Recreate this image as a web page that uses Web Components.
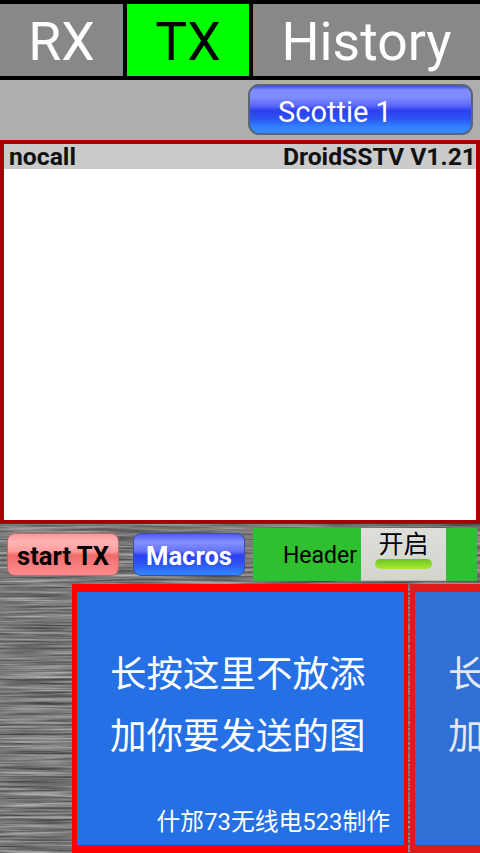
<!DOCTYPE html>
<html>
<head>
<meta charset="utf-8">
<style>
html, body { margin: 0; padding: 0; }
body { width: 480px; height: 853px; overflow: hidden; font-family: Roboto, "Noto Sans CJK SC", sans-serif; }
</style>
</head>
<body>
<sstv-app>
  <sstv-tabs slot="tabs">
    <sstv-tab>RX</sstv-tab>
    <sstv-tab active>TX</sstv-tab>
    <sstv-tab wide>History</sstv-tab>
  </sstv-tabs>
  <sstv-mode slot="mode">Scottie 1</sstv-mode>
  <sstv-preview slot="preview" call="nocall" version="DroidSSTV V1.21"></sstv-preview>
  <sstv-controls slot="controls">
    <sstv-button color="red">start TX</sstv-button>
    <sstv-button color="blue">Macros</sstv-button>
    <sstv-header-switch>开启</sstv-header-switch>
  </sstv-controls>
  <sstv-gallery slot="gallery">
    <sstv-card credit="什邡73无线电523制作">长按这里不放添<br>加你要发送的图</sstv-card>
    <sstv-card dim credit="什邡73无线电523制作">长按这里不放添<br>加你要发送的图</sstv-card>
  </sstv-gallery>
</sstv-app>

<script>
const FONT = 'Roboto, "Noto Sans CJK SC", sans-serif'

class SstvApp extends HTMLElement {
  constructor() {
    super()
    const shadow = this.attachShadow({mode: 'open'})
    shadow.innerHTML = `
<style>
:host {
  display: flex;
  flex-direction: column;
  width: 480px;
  height: 853px;
  font-family: ${FONT};
  overflow: hidden;
  background: #aaa;
}
.wood {
  position: relative;
  flex: 1;
  display: flex;
  flex-direction: column;
  overflow: hidden;
  background: #777;
}
.wood svg {
  position: absolute;
  left: 0;
  top: 0;
}
.wood > div {
  position: relative;
  display: flex;
  flex-direction: column;
  flex: 1;
  min-height: 0;
}
.mode {
  display: flex;
  justify-content: flex-end;
  height: 60px;
  background: #aeaeae;
  box-sizing: border-box;
  padding: 4px 7px 0 0;
}
</style>
<slot name="tabs"></slot>
<div class="mode"><slot name="mode"></slot></div>
<slot name="preview"></slot>
<div class="wood">
  <svg width="480" height="329" aria-hidden="true">
    <filter id="brushed" x="0" y="0" width="100%" height="100%" color-interpolation-filters="sRGB">
      <feTurbulence type="fractalNoise" baseFrequency="0.012 0.42" numOctaves="3" seed="7"/>
      <feColorMatrix type="matrix" values="0.65 0 0 0 0.15  0.65 0 0 0 0.15  0.65 0 0 0 0.15  0 0 0 0 1"/>
    </filter>
    <rect width="480" height="329" filter="url(#brushed)"/>
  </svg>
  <div>
    <slot name="controls"></slot>
    <slot name="gallery"></slot>
  </div>
</div>
`
  }
}
customElements.define('sstv-app', SstvApp)

class SstvTabs extends HTMLElement {
  constructor() {
    super()
    const shadow = this.attachShadow({mode: 'open'})
    shadow.innerHTML = `
<style>
:host {
  display: flex;
  gap: 4px;
  height: 72px;
  padding: 4px 0;
  background: #000;
}
</style>
<slot></slot>
`
  }
}
customElements.define('sstv-tabs', SstvTabs)

class SstvTab extends HTMLElement {
  constructor() {
    super()
    const shadow = this.attachShadow({mode: 'open'})
    shadow.innerHTML = `
<style>
:host {
  display: flex;
  align-items: center;
  justify-content: center;
  width: 123px;
  background: #888;
  color: #fff;
  font-size: 53.5px;
  line-height: 72px;
  padding-top: 4px;
  box-sizing: border-box;
}
:host([active]) {
  width: 122px;
  background: #00ff00;
  color: #000;
}
:host([wide]) {
  width: 227px;
}
</style>
<slot></slot>
`
  }
}
customElements.define('sstv-tab', SstvTab)

class SstvMode extends HTMLElement {
  constructor() {
    super()
    const shadow = this.attachShadow({mode: 'open'})
    shadow.innerHTML = `
<style>
:host {
  display: flex;
  align-items: center;
  width: 225px;
  height: 51px;
  box-sizing: border-box;
  padding-left: 28px;
  padding-top: 4px;
  border: 2px solid #5a6478;
  border-radius: 11px;
  color: #fff;
  font-size: 29px;
  background: linear-gradient(#3a4cf0 0, #7f8cff 8%, #7f8cff 24%, #5a68f8 42%, #2e40f0 52%, #2c50f4 68%, #3384ff 88%, #3388ff 100%);
}
</style>
<slot></slot>
`
  }
}
customElements.define('sstv-mode', SstvMode)

class SstvPreview extends HTMLElement {
  constructor() {
    super()
    const shadow = this.attachShadow({mode: 'open'})
    shadow.innerHTML = `
<style>
:host {
  display: flex;
  flex-direction: column;
  height: 384px;
  box-sizing: border-box;
  border: 4px solid #a80000;
  background: #fff;
}
.bar {
  display: flex;
  justify-content: space-between;
  align-items: center;
  height: 25px;
  padding: 0 0 0 5px;
  background: #cbcbcb;
  color: #111;
  font-size: 24.7px;
  font-weight: 700;
  white-space: nowrap;
}
</style>
<div class="bar"><span id="call"></span><span id="version"></span></div>
<slot></slot>
`
    shadow.getElementById('call').textContent = this.getAttribute('call')
    shadow.getElementById('version').textContent = this.getAttribute('version')
  }
}
customElements.define('sstv-preview', SstvPreview)

class SstvControls extends HTMLElement {
  constructor() {
    super()
    const shadow = this.attachShadow({mode: 'open'})
    shadow.innerHTML = `
<style>
:host {
  display: flex;
  align-items: flex-start;
  height: 60px;
  box-sizing: border-box;
  padding: 4px 3px 0 7px;
}
</style>
<slot></slot>
`
  }
}
customElements.define('sstv-controls', SstvControls)

class SstvButton extends HTMLElement {
  constructor() {
    super()
    const shadow = this.attachShadow({mode: 'open'})
    shadow.innerHTML = `
<style>
:host {
  display: flex;
  align-items: center;
  justify-content: center;
  width: 112px;
  height: 43px;
  margin-top: 5px;
  margin-right: 14px;
  padding-top: 3px;
  box-sizing: border-box;
  border-radius: 8px;
  font-size: 25.6px;
  font-weight: 700;
}
:host([color=red]) {
  color: #000;
  border: 1px solid #b86a6a;
  background: linear-gradient(#ff9a9a 0, #ffb4b4 20%, #ff9c9c 42%, #f06a6a 52%, #f77a7a 70%, #ff8c8c 100%);
}
:host([color=blue]) {
  color: #fff;
  margin-right: 8px;
  border: 1px solid #3b4bb0;
  background: linear-gradient(#4c5cf0 0, #8490ff 20%, #6472f8 42%, #2e40f0 52%, #2c54f4 72%, #3388ff 100%);
}
</style>
<slot></slot>
`
  }
}
customElements.define('sstv-button', SstvButton)

class SstvHeaderSwitch extends HTMLElement {
  constructor() {
    super()
    const shadow = this.attachShadow({mode: 'open'})
    shadow.innerHTML = `
<style>
:host {
  display: flex;
  align-items: stretch;
  justify-content: flex-end;
  width: 224px;
  height: 53px;
  box-sizing: border-box;
  padding-right: 31px;
  background: #2fbf2f;
  color: #000;
  font-size: 23px;
}
.label {
  align-self: center;
  margin-right: 4px;
  margin-top: 2px;
}
.toggle {
  display: flex;
  flex-direction: column;
  align-items: center;
  width: 85px;
  background: linear-gradient(#dedfdb, #d2d4ce);
  border-bottom: 1px solid #bbb;
  box-sizing: border-box;
  font-size: 25px;
}
.text {
  line-height: 32px;
  margin-top: 1px;
}
.led {
  width: 57px;
  height: 10px;
  margin-top: -2px;
  border-radius: 5px;
  background: linear-gradient(#6fc41e, #a8ea38);
}
</style>
<span class="label">Header</span>
<div class="toggle">
  <span class="text"><slot></slot></span>
  <span class="led"></span>
</div>
`
  }
}
customElements.define('sstv-header-switch', SstvHeaderSwitch)

class SstvGallery extends HTMLElement {
  constructor() {
    super()
    const shadow = this.attachShadow({mode: 'open'})
    shadow.innerHTML = `
<style>
:host {
  display: flex;
  flex: 1;
  min-height: 0;
  gap: 2px;
  padding-left: 72px;
  overflow: hidden;
}
</style>
<slot></slot>
`
  }
}
customElements.define('sstv-gallery', SstvGallery)

class SstvCard extends HTMLElement {
  constructor() {
    super()
    const shadow = this.attachShadow({mode: 'open'})
    shadow.innerHTML = `
<style>
:host {
  display: flex;
  flex-direction: column;
  flex: none;
  width: 336px;
  height: 269px;
  box-sizing: border-box;
  border: solid #ff0000;
  border-width: 8px 4px 8px 5px;
  background: #2470e4;
  color: #fff;
  padding: 0 0 0 33px;
}
:host([dim]) {
  border-color: #e01a1a;
  background: #3070d4;
  color: #e4e8f0;
}
.msg {
  font-size: 36.5px;
  line-height: 62px;
  margin-top: 52px;
  white-space: nowrap;
}
.credit {
  align-self: flex-end;
  margin-top: auto;
  margin-bottom: 8px;
  margin-right: 14px;
  font-size: 23.8px;
  line-height: 30px;
  white-space: nowrap;
}
</style>
<div class="msg"><slot></slot></div>
<div class="credit" id="credit"></div>
`
    shadow.getElementById('credit').textContent = this.getAttribute('credit')
  }
}
customElements.define('sstv-card', SstvCard)
</script>
</body>
</html>
